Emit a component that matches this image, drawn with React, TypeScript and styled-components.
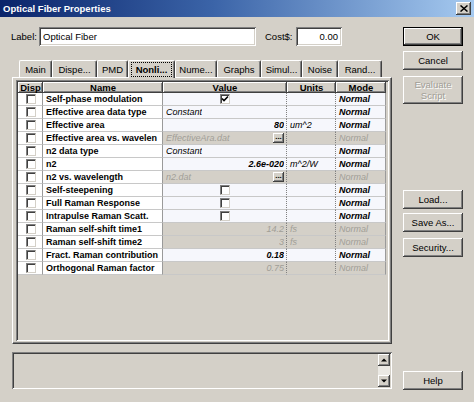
import styled, { createGlobalStyle, css } from 'styled-components';

const GlobalStyle = createGlobalStyle`
  html, body {
    margin: 0;
    padding: 0;
    background: #d4d0c8;
  }
  body {
    font-family: 'Liberation Sans', Arial, sans-serif;
    font-size: 9px;
    color: #000;
  }
  * { box-sizing: border-box; }
`;

const raised = css`
  box-shadow: inset -1px -1px #404040, inset 1px 1px #ffffff, inset -2px -2px #808080, inset 2px 2px #d4d0c8;
`;

const sunken = css`
  box-shadow: inset 1px 1px #808080, inset -1px -1px #ffffff, inset 2px 2px #404040, inset -2px -2px #d4d0c8;
`;

type ValueKind =
  | { type: 'check'; checked: boolean }
  | { type: 'text'; text: string }
  | { type: 'number'; text: string }
  | { type: 'file'; text: string };

interface Property {
  name: string;
  value: ValueKind;
  units?: string;
  disabled?: boolean;
}

const properties: Property[] = [
  { name: 'Self-phase modulation', value: { type: 'check', checked: true } },
  { name: 'Effective area data type', value: { type: 'text', text: 'Constant' } },
  { name: 'Effective area', value: { type: 'number', text: '80' }, units: 'um^2' },
  { name: 'Effective area vs. wavelen', value: { type: 'file', text: 'EffectiveAra.dat' }, disabled: true },
  { name: 'n2 data type', value: { type: 'text', text: 'Constant' } },
  { name: 'n2', value: { type: 'number', text: '2.6e-020' }, units: 'm^2/W' },
  { name: 'n2 vs. wavelength', value: { type: 'file', text: 'n2.dat' }, disabled: true },
  { name: 'Self-steepening', value: { type: 'check', checked: false } },
  { name: 'Full Raman Response', value: { type: 'check', checked: false } },
  { name: 'Intrapulse Raman Scatt.', value: { type: 'check', checked: false } },
  { name: 'Raman self-shift time1', value: { type: 'number', text: '14.2' }, units: 'fs', disabled: true },
  { name: 'Raman self-shift time2', value: { type: 'number', text: '3' }, units: 'fs', disabled: true },
  { name: 'Fract. Raman contribution', value: { type: 'number', text: '0.18' } },
  { name: 'Orthogonal Raman factor', value: { type: 'number', text: '0.75' }, disabled: true },
];

const tabs = [
  { label: 'Main', width: 33 },
  { label: 'Dispe...', width: 45 },
  { label: 'PMD', width: 31 },
  { label: 'Nonli...', width: 47 },
  { label: 'Nume...', width: 42 },
  { label: 'Graphs', width: 44 },
  { label: 'Simul...', width: 41 },
  { label: 'Noise', width: 36 },
  { label: 'Rand...', width: 44 },
];

const ACTIVE_TAB = 'Nonli...';

const Window = styled.div`
  width: 474px;
  height: 402px;
  background: #d4d0c8;
  display: flex;
  flex-direction: column;
  overflow: hidden;
`;

const TitleBar = styled.div`
  height: 17px;
  flex-shrink: 0;
  display: flex;
  align-items: center;
  justify-content: space-between;
  padding: 0 3px 0 3px;
  background: linear-gradient(90deg, #0a246a 0%, #3b64a8 45%, #a6caf0 100%);
`;

const Title = styled.span`
  color: #fff;
  font-weight: bold;
  font-size: 9.5px;
`;

const CloseButton = styled.div`
  width: 15px;
  height: 13px;
  background: #d4d0c8;
  ${raised};
  display: flex;
  align-items: center;
  justify-content: center;
`;

const Body = styled.div`
  flex: 1;
  display: flex;
  padding: 10px 11px 12px 11px;
`;

const LeftColumn = styled.div`
  width: 381px;
  display: flex;
  flex-direction: column;
`;

const RightColumn = styled.div`
  width: 60px;
  margin-left: 11px;
  display: flex;
  flex-direction: column;
`;

const FieldRow = styled.div`
  height: 19px;
  display: flex;
  align-items: center;
`;

const FieldLabel = styled.span<{ $width: number; $gap?: number }>`
  width: ${(p) => p.$width}px;
  margin-left: ${(p) => p.$gap ?? 0}px;
  font-size: 9.5px;
`;

const TextInput = styled.div<{ $width: number; $align?: 'left' | 'right' }>`
  width: ${(p) => p.$width}px;
  height: 19px;
  background: #fff;
  ${sunken};
  padding: 0 4px;
  display: flex;
  align-items: center;
  justify-content: ${(p) => (p.$align === 'right' ? 'flex-end' : 'flex-start')};
  font-size: 9.5px;
`;

const TabStrip = styled.div`
  margin-top: 14px;
  height: 17px;
  padding-left: 8px;
  display: flex;
  align-items: flex-end;
`;

const Tab = styled.div<{ $width: number; $active?: boolean }>`
  width: ${(p) => p.$width}px;
  height: ${(p) => (p.$active ? 18 : 17)}px;
  margin-bottom: ${(p) => (p.$active ? -1 : 0)}px;
  position: relative;
  z-index: ${(p) => (p.$active ? 1 : 0)};
  background: #d4d0c8;
  border-top: 1px solid #fff;
  border-left: 1px solid #fff;
  border-right: 1px solid #404040;
  border-radius: 2px 2px 0 0;
  box-shadow: inset -1px 0 #808080;
  display: flex;
  align-items: center;
  justify-content: center;
  padding: 1px 2px;
  font-weight: ${(p) => (p.$active ? 'bold' : 'normal')};
  font-size: 9.5px;
`;

const FocusRing = styled.span`
  border: 1px dotted #000;
  padding: 1px 3px;
  width: 100%;
  height: 100%;
  display: flex;
  align-items: center;
  justify-content: center;
`;

const Panel = styled.div`
  margin-left: 1px;
  width: 380px;
  height: 267px;
  border-top: 1px solid #fff;
  border-left: 1px solid #fff;
  border-right: 1px solid #404040;
  border-bottom: 1px solid #404040;
  box-shadow: inset -1px -1px #808080;
  padding: 2px 2px 2px 3px;
`;

const GridControl = styled.div`
  width: 373px;
  height: 261px;
  background: #d4d0c8;
  ${sunken};
  padding: 2px;
`;

const Table = styled.div`
  display: grid;
  grid-template-columns: 25px 120px 124px 49px 50px;
  grid-template-rows: 11px;
  grid-auto-rows: 13px;
`;

const HeaderCell = styled.div`
  background: #d4d0c8;
  ${raised};
  font-weight: bold;
  font-size: 9.5px;
  line-height: 11px;
  text-align: center;
  overflow: hidden;
  white-space: nowrap;
`;

type CellKind = 'disp' | 'name' | 'value' | 'units' | 'mode';

const Cell = styled.div<{ $kind: CellKind; $disabled?: boolean; $align?: 'left' | 'center' | 'right' }>`
  display: flex;
  align-items: center;
  justify-content: ${(p) =>
    p.$align === 'right' ? 'flex-end' : p.$align === 'center' ? 'center' : 'flex-start'};
  padding: 0 2px 0 3px;
  overflow: hidden;
  white-space: nowrap;
  border-bottom: 1px solid #c8c8c8;
  border-right: ${(p) =>
    p.$kind === 'value' || p.$kind === 'units' ? '1px dotted #808080' : '1px solid #9a9a9a'};
  background: ${(p) =>
    p.$kind === 'disp' || p.$kind === 'name' ? '#ffffff' : p.$disabled ? '#d4d0c8' : '#f6f7fc'};
  color: ${(p) => (p.$disabled && p.$kind !== 'name' ? '#a19e97' : '#000')};
  font-size: 9px;
  font-weight: ${(p) => (p.$kind === 'name' || (p.$kind === 'mode' && !p.$disabled) ? 'bold' : 'normal')};
  font-style: ${(p) => (p.$kind === 'name' || p.$kind === 'disp' ? 'normal' : 'italic')};
`;

const ValueText = styled.span<{ $bold?: boolean; $grow?: boolean }>`
  font-weight: ${(p) => (p.$bold ? 'bold' : 'normal')};
  flex: ${(p) => (p.$grow ? 1 : 'none')};
  overflow: hidden;
`;

const CheckBox = styled.span`
  width: 10px;
  height: 10px;
  background: #fff;
  border-top: 1px solid #808080;
  border-left: 1px solid #808080;
  border-right: 1px solid #d4d0c8;
  border-bottom: 1px solid #d4d0c8;
  box-shadow: inset 1px 1px #404040;
  display: flex;
  align-items: center;
  justify-content: center;
`;

const EllipsisButton = styled.span`
  width: 11px;
  height: 10px;
  background: #d4d0c8;
  ${raised};
  font-style: normal;
  font-weight: bold;
  font-size: 8px;
  line-height: 8px;
  color: #000;
  text-align: center;
  flex-shrink: 0;
`;

const Button = styled.div<{ $height?: number; $gap?: number; $default?: boolean; $disabled?: boolean }>`
  height: ${(p) => p.$height ?? 19}px;
  margin-top: ${(p) => p.$gap ?? 0}px;
  background: #d4d0c8;
  ${raised};
  ${(p) =>
    p.$default &&
    css`
      box-shadow: inset 0 0 0 1px #000, inset -2px -2px #404040, inset 2px 2px #ffffff,
        inset -3px -3px #808080;
    `}
  display: flex;
  align-items: center;
  justify-content: center;
  text-align: center;
  font-size: 9.5px;
  line-height: 11px;
  color: ${(p) => (p.$disabled ? '#a19e97' : '#000')};
  text-shadow: ${(p) => (p.$disabled ? '1px 1px #ffffff' : 'none')};
`;

const HelpButton = styled(Button)`
  margin-top: auto;
`;

const StatusBox = styled.div`
  margin-top: 8px;
  margin-left: 1px;
  width: 380px;
  height: 37px;
  background: #d4d0c8;
  ${sunken};
  padding: 2px;
  display: flex;
  justify-content: flex-end;
`;

const ScrollBar = styled.div`
  width: 12px;
  display: flex;
  flex-direction: column;
`;

const ScrollArrow = styled.div`
  width: 12px;
  height: 12px;
  background: #d4d0c8;
  ${raised};
  display: flex;
  align-items: center;
  justify-content: center;
`;

const ScrollTrack = styled.div`
  flex: 1;
  background: #ebe9e4;
`;

const Check = () => (
  <svg width="8" height="8" viewBox="0 0 8 8">
    <path d="M1 3.5 L3 5.5 L7 1.5" fill="none" stroke="#000" strokeWidth="1.6" />
  </svg>
);

const Arrow = ({ up }: { up?: boolean }) => (
  <svg width="6" height="4" viewBox="0 0 6 4">
    <path d={up ? 'M0 3.5 L3 0.5 L6 3.5 Z' : 'M0 0.5 L3 3.5 L6 0.5 Z'} fill="#000" />
  </svg>
);

const renderValue = (p: Property) => {
  const v = p.value;
  switch (v.type) {
    case 'check':
      return (
        <Cell $kind="value" $align="center" $disabled={p.disabled}>
          <CheckBox>{v.checked && <Check />}</CheckBox>
        </Cell>
      );
    case 'text':
      return (
        <Cell $kind="value" $disabled={p.disabled}>
          <ValueText>{v.text}</ValueText>
        </Cell>
      );
    case 'number':
      return (
        <Cell $kind="value" $align="right" $disabled={p.disabled}>
          <ValueText $bold={!p.disabled}>{v.text}</ValueText>
        </Cell>
      );
    case 'file':
      return (
        <Cell $kind="value" $disabled={p.disabled}>
          <ValueText $grow>{v.text}</ValueText>
          <EllipsisButton>...</EllipsisButton>
        </Cell>
      );
  }
};

const App = () => {
  return (
    <Window>
      <GlobalStyle />
      <TitleBar>
        <Title>Optical Fiber Properties</Title>
        <CloseButton>
          <svg width="8" height="7" viewBox="0 0 8 7">
            <path d="M0.5 0.5 L7.5 6.5 M7.5 0.5 L0.5 6.5" stroke="#000" strokeWidth="1.5" />
          </svg>
        </CloseButton>
      </TitleBar>

      <Body>
        <LeftColumn>
          <FieldRow>
            <FieldLabel $width={28}>Label:</FieldLabel>
            <TextInput $width={217}>Optical Fiber</TextInput>
            <FieldLabel $width={31} $gap={9}>Cost$:</FieldLabel>
            <TextInput $width={46} $align="right">0.00</TextInput>
          </FieldRow>

          <TabStrip>
            {tabs.map((t) => (
              <Tab key={t.label} $width={t.width} $active={t.label === ACTIVE_TAB}>
                {t.label === ACTIVE_TAB ? <FocusRing>{t.label}</FocusRing> : t.label}
              </Tab>
            ))}
          </TabStrip>

          <Panel>
            <GridControl>
              <Table>
                <HeaderCell>Disp</HeaderCell>
                <HeaderCell>Name</HeaderCell>
                <HeaderCell>Value</HeaderCell>
                <HeaderCell>Units</HeaderCell>
                <HeaderCell>Mode</HeaderCell>
                {properties.map((p) => (
                  <Row key={p.name} p={p} />
                ))}
              </Table>
            </GridControl>
          </Panel>

          <StatusBox>
            <ScrollBar>
              <ScrollArrow>
                <Arrow up />
              </ScrollArrow>
              <ScrollTrack />
              <ScrollArrow>
                <Arrow />
              </ScrollArrow>
            </ScrollBar>
          </StatusBox>
        </LeftColumn>

        <RightColumn>
          <Button $default>OK</Button>
          <Button $gap={5}>Cancel</Button>
          <Button $gap={6} $height={28} $disabled>
            Evaluate
            <br />
            Script
          </Button>
          <Button $gap={86}>Load...</Button>
          <Button $gap={4}>Save As...</Button>
          <Button $gap={6}>Security...</Button>
          <HelpButton>Help</HelpButton>
        </RightColumn>
      </Body>
    </Window>
  );
};

const Row = ({ p }: { p: Property }) => (
  <>
    <Cell $kind="disp" $align="center">
      <CheckBox />
    </Cell>
    <Cell $kind="name">{p.name}</Cell>
    {renderValue(p)}
    <Cell $kind="units" $disabled={p.disabled}>
      {p.units}
    </Cell>
    <Cell $kind="mode" $disabled={p.disabled}>
      Normal
    </Cell>
  </>
);

export default App;
